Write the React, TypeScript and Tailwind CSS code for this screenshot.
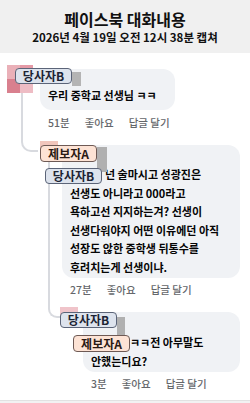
import React from "react";

const FONT = { fontFamily: '"Noto Sans CJK KR", "Noto Sans", sans-serif' };

function LabelB({ className }: { className: string }) {
  return (
    <div
      className={`absolute z-10 w-[57px] h-[16px] rounded-[4px] border border-[#5b6478] bg-[#dde3ed] flex items-center justify-center text-[12px] font-bold leading-none text-[#1c2333] ${className}`}
    >
      당사자B
    </div>
  );
}

function LabelA({ className }: { className: string }) {
  return (
    <div
      className={`absolute z-10 w-[57px] h-[17px] rounded-[4px] border border-[#6e5a55] bg-[#fde3d5] flex items-center justify-center text-[12px] font-bold leading-none text-[#2a1a14] ${className}`}
    >
      제보자A
    </div>
  );
}

function Meta({ time }: { time: string }) {
  return (
    <div className="flex gap-[15px] pl-2 text-[10.5px] leading-[16px] font-medium text-[#65676b]">
      <span>{time}</span>
      <span>좋아요</span>
      <span>답글 달기</span>
    </div>
  );
}

export default function App() {
  return (
    <div
      className="w-[250px] h-[403px] bg-white overflow-hidden flex flex-col text-[#050505]"
      style={FONT}
    >
      <header className="h-[53px] shrink-0 bg-[#f0f0f0] flex flex-col items-center pt-[8px] text-[#111]">
        <div className="text-[16px] font-bold leading-[22px]">페이스북 대화내용</div>
        <div className="text-[11.5px] font-bold leading-[15px]">2026년 4월 19일 오전 12시 38분 캡쳐</div>
      </header>

      <main className="flex-1 pt-[12px] pl-[7px]">
        {/* comment 1 */}
        <div className="relative flex">
          <div className="w-[33px] shrink-0">
            <div className="w-[26px] h-[28px] grid grid-cols-2 grid-rows-2">
              <div className="bg-[#eab0b8]" />
              <div className="bg-[#e59aa6]" />
              <div className="bg-[#d9808e]" />
              <div className="bg-[#eebcc4]" />
            </div>
          </div>
          <LabelB className="left-[8px] top-[3px]" />
          <div className="absolute left-[65px] top-[7px] w-[9px] h-[14px] bg-[#b4b4b4]" />
          <div className="flex flex-col">
            <div className="mt-[4px] w-[135px] rounded-[12px] bg-[#f0f2f5] px-2 pt-[17px] pb-[5px] text-[11px] leading-[19px] font-semibold whitespace-nowrap">
              우리 중학교 선생님 ㅋㅋ
            </div>
            <div className="mt-[5px]">
              <Meta time="51분" />
            </div>

            {/* comment 2 */}
            <div className="relative flex mt-[10px]">
              <div className="absolute left-[-19px] top-[-48px] w-[17px] h-[59px] border-l-2 border-b-2 border-[#d8dadf] rounded-bl-[10px]" />
              <div className="w-[22px] shrink-0">
                <div className="w-[18px] h-[18px] bg-[#f1c6bc]" />
              </div>
              <LabelA className="left-[0px] top-[4px]" />
              <div className="absolute left-[57px] top-[6px] w-[10px] h-[25px] bg-[#b0b0b0]" />
              <LabelB className="left-[5px] top-[27px]" />
              <div className="flex flex-col">
                <div className="mt-[4px] w-[178px] rounded-[12px] bg-[#f0f2f5] px-2 pt-[20px] pb-[2px] text-[11px] leading-[18.5px] font-semibold whitespace-nowrap">
                  <div className="pl-[35px]">넌 술마시고 성광진은</div>
                  <div>선생도 아니라고 000라고</div>
                  <div>욕하고선 지지하는겨? 선생이</div>
                  <div>선생다워야지 어떤 이유에던 아직</div>
                  <div>성장도 않한 중학생 뒤통수를</div>
                  <div>후려치는게 선생이냐.</div>
                </div>
                <div className="mt-[4px]">
                  <Meta time="27분" />
                </div>

                {/* comment 3 */}
                <div className="relative flex mt-[9px]">
                  <div className="absolute left-[-14px] top-[-148px] w-[12px] h-[159px] border-l-2 border-b-2 border-[#d8dadf] rounded-bl-[9px]" />
                  <div className="w-[21px] shrink-0">
                    <div className="-ml-[2px] w-[18px] h-[18px] bg-[#f0c4ca]" />
                  </div>
                  <LabelB className="left-[-2px] top-[5px]" />
                  <div className="absolute left-[55px] top-[10px] w-[8px] h-[20px] bg-[#b0b0b0]" />
                  <LabelA className="left-[11px] top-[28px]" />
                  <div className="flex flex-col">
                    <div className="mt-[5px] w-[157px] rounded-[12px] bg-[#f0f2f5] px-2 pt-[21px] pb-[2px] text-[11px] leading-[18.5px] font-semibold whitespace-nowrap">
                      <div className="pl-[39px]">ㅋㅋ전 아무말도</div>
                      <div>안했는디요?</div>
                    </div>
                    <div className="mt-[4px]">
                      <Meta time="3분" />
                    </div>
                  </div>
                </div>
              </div>
            </div>
          </div>
        </div>
      </main>

      <footer className="h-[3px] shrink-0 border-t border-[#e2e2e2] bg-[#f2f2f2]" />
    </div>
  );
}
